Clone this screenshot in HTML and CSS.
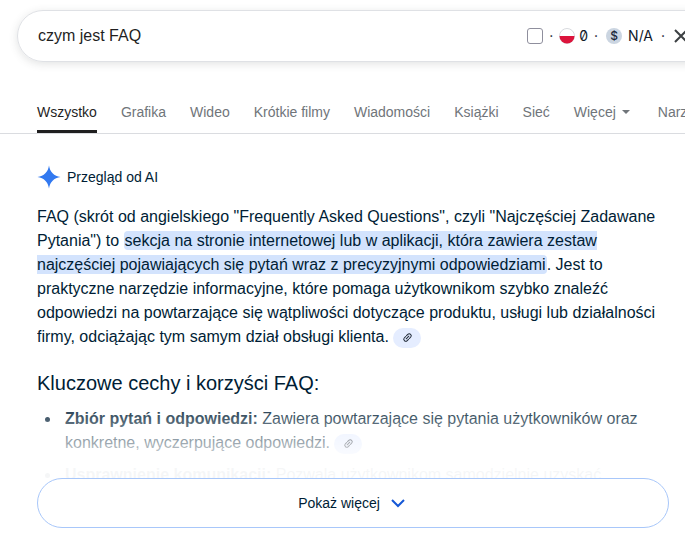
FILE: index.html
```html
<!DOCTYPE html>
<html lang="pl">
<head>
  <meta charset="UTF-8">
  <meta name="viewport" content="width=device-width, initial-scale=1.0">
  <title>czym jest FAQ</title>
  <link rel="stylesheet" href="styles.css">
</head>
<body>
  <header>
    <form class="search-bar">
      <input type="text" class="search-input" aria-label="Szukaj" value="czym jest FAQ">
      <div class="metrics">
        <input type="checkbox" class="metrics-check" aria-label="Metryki">
        <span class="dot">·</span>
        <svg class="badge" viewBox="0 0 16 16">
          <circle cx="8" cy="8" r="7.5" fill="#fff" stroke="#d8dade"/>
          <path d="M0.5 8h15a7.5 7.5 0 0 1-15 0z" fill="#dc143c"/>
        </svg>
        <span class="volume">0</span>
        <span class="dot">·</span>
        <span class="badge coin">$</span>
        <span class="cpc">N/A</span>
        <span class="dot">·</span>
      </div>
      <button type="reset" class="clear" aria-label="Wyczyść">
        <svg width="14" height="14" viewBox="0 0 14 14"><path d="M1 1l12 12M13 1L1 13" stroke="#3c4043" stroke-width="2"/></svg>
      </button>
    </form>
    <nav class="tabs">
      <a href="#" class="active">Wszystko</a>
      <a href="#">Grafika</a>
      <a href="#">Wideo</a>
      <a href="#">Krótkie filmy</a>
      <a href="#">Wiadomości</a>
      <a href="#">Książki</a>
      <a href="#">Sieć</a>
      <a href="#" class="more">Więcej <svg width="8" height="4" viewBox="0 0 8 4"><path d="M0 0h8L4 4z" fill="#70757a"/></svg></a>
      <a href="#">Narzędzia</a>
    </nav>
  </header>

  <main class="overview">
    <div class="overview-title">
      <svg width="24" height="24" viewBox="0 0 24 24"><path d="M12 0.5C13 7 17 11 23.5 12C17 13 13 17 12 23.5C11 17 7 13 0.5 12C7 11 11 7 12 0.5z" fill="#3279f0"/></svg>
      <span>Przegląd od AI</span>
    </div>

    <div class="answer">
      <p>FAQ (skrót od angielskiego "Frequently Asked Questions", czyli "Najczęściej Zadawane Pytania") to <mark>sekcja na stronie internetowej lub w aplikacji, która zawiera zestaw najczęściej pojawiających się pytań wraz z precyzyjnymi odpowiedziami</mark>. Jest to praktyczne narzędzie informacyjne, które pomaga użytkownikom szybko znaleźć odpowiedzi na powtarzające się wątpliwości dotyczące produktu, usługi lub działalności firmy, odciążając tym samym dział obsługi klienta.
        <button type="button" class="source" aria-label="Źródło"><svg width="11" height="11" viewBox="0 0 12 12"><use href="#link-icon"/></svg></button>
      </p>
      <h2>Kluczowe cechy i korzyści FAQ:</h2>
      <ul>
        <li><strong>Zbiór pytań i odpowiedzi:</strong> Zawiera powtarzające się pytania użytkowników oraz konkretne, wyczerpujące odpowiedzi.
          <button type="button" class="source" aria-label="Źródło"><svg width="11" height="11" viewBox="0 0 12 12"><use href="#link-icon"/></svg></button>
        </li>
        <li><strong>Usprawnienie komunikacji:</strong> Pozwala użytkownikom samodzielnie uzyskać</li>
      </ul>
      <div class="fade"></div>
    </div>

    <button type="button" class="show-more">
      Pokaż więcej
      <svg width="14" height="9" viewBox="0 0 14 9"><path d="M1 1l6 6 6-6" fill="none" stroke="#1558d6" stroke-width="2"/></svg>
    </button>
  </main>

  <svg class="sprite">
    <symbol id="link-icon" viewBox="0 0 12 12">
      <g transform="rotate(-45 6 6)" fill="none" stroke="#1f2937" stroke-width="1.1" stroke-linecap="round">
        <path d="M5.3 3.8H3.4a2.2 2.2 0 0 0 0 4.4h1.9M6.7 3.8h1.9a2.2 2.2 0 0 1 0 4.4H6.7M4 6h4"/>
      </g>
    </symbol>
  </svg>
</body>
</html>
```

FILE: styles.css
```css
* {
  box-sizing: border-box;
}

body {
  margin: 0;
  font-family: "Liberation Sans", Arial, sans-serif;
  font-size: 16px;
  line-height: 24px;
  color: #001d35;
  background: #fff;
  overflow: hidden;
}

button {
  font: inherit;
  color: inherit;
  border: 0;
  background: none;
  padding: 0;
  cursor: pointer;
}

.search-bar {
  display: flex;
  align-items: center;
  height: 52px;
  margin: 10px -40px 0 17px;
  padding: 0 36px 0 20px;
  border: 1px solid #dfe1e5;
  border-radius: 26px;
  box-shadow: 0 2px 8px rgba(60, 64, 67, 0.15);
}

.search-input {
  flex: 1;
  min-width: 0;
  padding: 0;
  border: 0;
  outline: 0;
  font: inherit;
  color: #1f1f1f;
  background: none;
}

.metrics {
  display: flex;
  align-items: center;
  font-family: Inter, sans-serif;
  font-size: 14px;
  color: #111827;
}

.metrics-check {
  appearance: none;
  width: 16px;
  height: 16px;
  margin: 0;
  border: 1px solid #8f8f9d;
  border-radius: 3px;
}

.dot {
  width: 16px;
  text-align: center;
}

.badge {
  width: 16px;
  height: 16px;
}

.coin {
  border-radius: 50%;
  background: #cbd5e1;
  color: #1e293b;
  font-size: 12px;
  font-weight: 500;
  line-height: 16px;
  text-align: center;
  margin-left: 2px;
}

.volume {
  margin-left: 4px;
  font-feature-settings: "zero";
}

.cpc {
  margin: 0 2px 0 6px;
}

.clear {
  display: flex;
  margin-left: 3px;
}

.tabs {
  display: flex;
  gap: 24px;
  margin-top: 29px;
  padding: 0 37px;
  border-bottom: 1px solid #dadce0;
  font-size: 14px;
  white-space: nowrap;
}

.tabs a {
  height: 42px;
  padding-top: 9px;
  color: #70757a;
  text-decoration: none;
}

.tabs .active {
  color: #1f1f1f;
  border-bottom: 3px solid #1f1f1f;
}

.tabs .more {
  display: flex;
  align-items: center;
  gap: 6px;
  height: 33px;
  margin-top: 9px;
  padding: 0 4px 9px 0;
}

/* AI overview */
.overview {
  padding: 31px 16px 16px 37px;
}

.overview-title {
  display: flex;
  align-items: center;
  gap: 6px;
  font-size: 14px;
}

.answer {
  position: relative;
  height: 273px;
  margin-top: 16px;
  overflow: hidden;
}

.answer p {
  margin: 0;
}

.answer h2 {
  margin: 20px 0 10px;
  font-size: 20px;
  font-weight: 400;
  line-height: 28px;
}

.answer ul {
  margin: 0;
  padding-left: 24px;
}

.answer li {
  margin-bottom: 8px;
  padding-left: 4px;
}

mark {
  padding: 1px;
  border-radius: 4px;
  background: #d3e3fd;
  color: inherit;
}

.source {
  display: inline-flex;
  align-items: center;
  justify-content: center;
  width: 28px;
  height: 20px;
  border-radius: 10px;
  background: #e5edff;
  vertical-align: middle;
}

.fade {
  position: absolute;
  left: 0;
  right: 0;
  bottom: 0;
  height: 80px;
  background: linear-gradient(rgba(255, 255, 255, 0), rgba(255, 255, 255, 0.96) 88%);
}

.show-more {
  display: flex;
  align-items: center;
  justify-content: center;
  gap: 11px;
  width: 100%;
  height: 50px;
  padding-right: 3px;
  border: 1px solid #a8c7fa;
  border-radius: 25px;
  font-size: 14px;
}

.sprite {
  display: none;
}
```
